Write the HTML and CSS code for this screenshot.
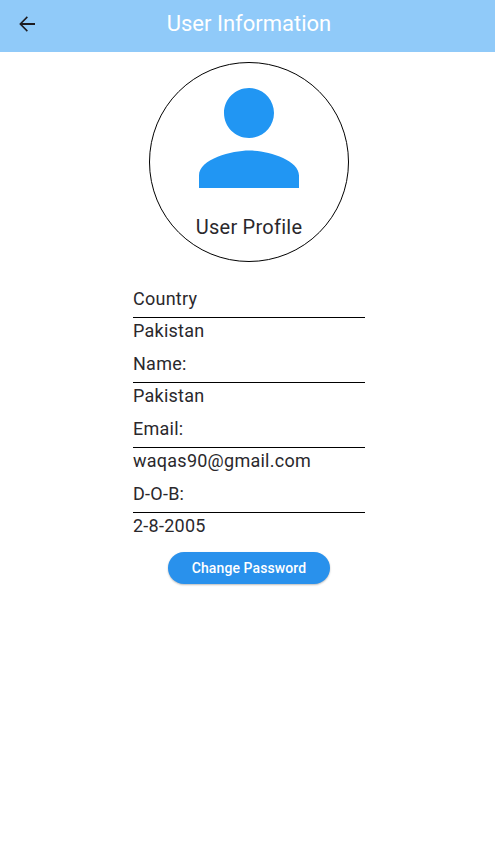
FILE: index.html
```html
<!DOCTYPE html>
<html lang="en">
<head>
<meta charset="utf-8">
<title>User Information</title>
<link rel="stylesheet" href="styles.css">
</head>
<body>
<header class="app-bar">
  <button class="back" aria-label="Back">
    <svg width="24" height="24" viewBox="0 0 24 24"><path d="M20 11H7.4l5.5-5.6L11.8 4.2 4.2 12l7.6 7.8 1.1-1.2L7.4 13H20z"/></svg>
  </button>
  <h1>User Information</h1>
</header>
<main class="content">
  <section class="profile">
    <svg class="avatar" width="150" height="150" viewBox="0 0 24 24"><path d="M12 12c2.21 0 4-1.79 4-4s-1.79-4-4-4-4 1.79-4 4 1.79 4 4 4zm0 2c-2.67 0-8 1.34-8 4v2h16v-2c0-2.66-5.33-4-8-4z"/></svg>
    <p class="caption">User Profile</p>
  </section>
  <dl class="details">
    <dt>Country</dt><dd>Pakistan</dd>
    <dt>Name:</dt><dd>Pakistan</dd>
    <dt>Email:</dt><dd>waqas90@gmail.com</dd>
    <dt>D-O-B:</dt><dd>2-8-2005</dd>
  </dl>
  <button class="change">Change Password</button>
</main>
</body>
</html>
```
FILE: styles.css
```css
* { box-sizing: border-box; }
body {
  margin: 0;
  min-height: 100vh;
  overflow: hidden;
  background: #fff;
  color: #2a282c;
  font-family: Roboto, sans-serif;
}
.app-bar {
  display: grid;
  grid-template-columns: 54px 1fr 51px;
  height: 52px;
  background: #90caf9;
}
.back {
  height: 48px;
  padding: 0;
  border: 0;
  background: none;
}
.back svg { display: block; margin: 0 auto; fill: #1d1b20; }
h1 {
  margin: 0;
  color: #fff;
  font-size: 22px;
  font-weight: 400;
  line-height: 47px;
  text-align: center;
}
.content {
  display: flex;
  flex-direction: column;
  align-items: center;
  width: 498px;
  padding-top: 10px;
}
.profile {
  display: flex;
  flex-direction: column;
  align-items: center;
  width: 200px;
  height: 200px;
  border: 1px solid #000;
  border-radius: 50%;
}
.avatar { fill: #2196f3; }
.caption {
  margin: 2px 0 0;
  font-size: 20px;
  line-height: 24px;
  letter-spacing: .25px;
}
.details {
  width: 232px;
  margin: 20px 0 0;
  font-size: 18px;
  letter-spacing: .25px;
}
dt {
  height: 36px;
  border-bottom: 1px solid #000;
  line-height: 34px;
}
dd {
  height: 29px;
  margin: 0;
  line-height: 26px;
}
.change {
  width: 162px;
  height: 32px;
  margin-top: 10px;
  padding: 0;
  border: 0;
  border-radius: 16px;
  background: #2991ec;
  color: #fff;
  font: 500 14px Roboto, sans-serif;
  letter-spacing: .1px;
  box-shadow: 0 1px 2px #0004;
}
```
